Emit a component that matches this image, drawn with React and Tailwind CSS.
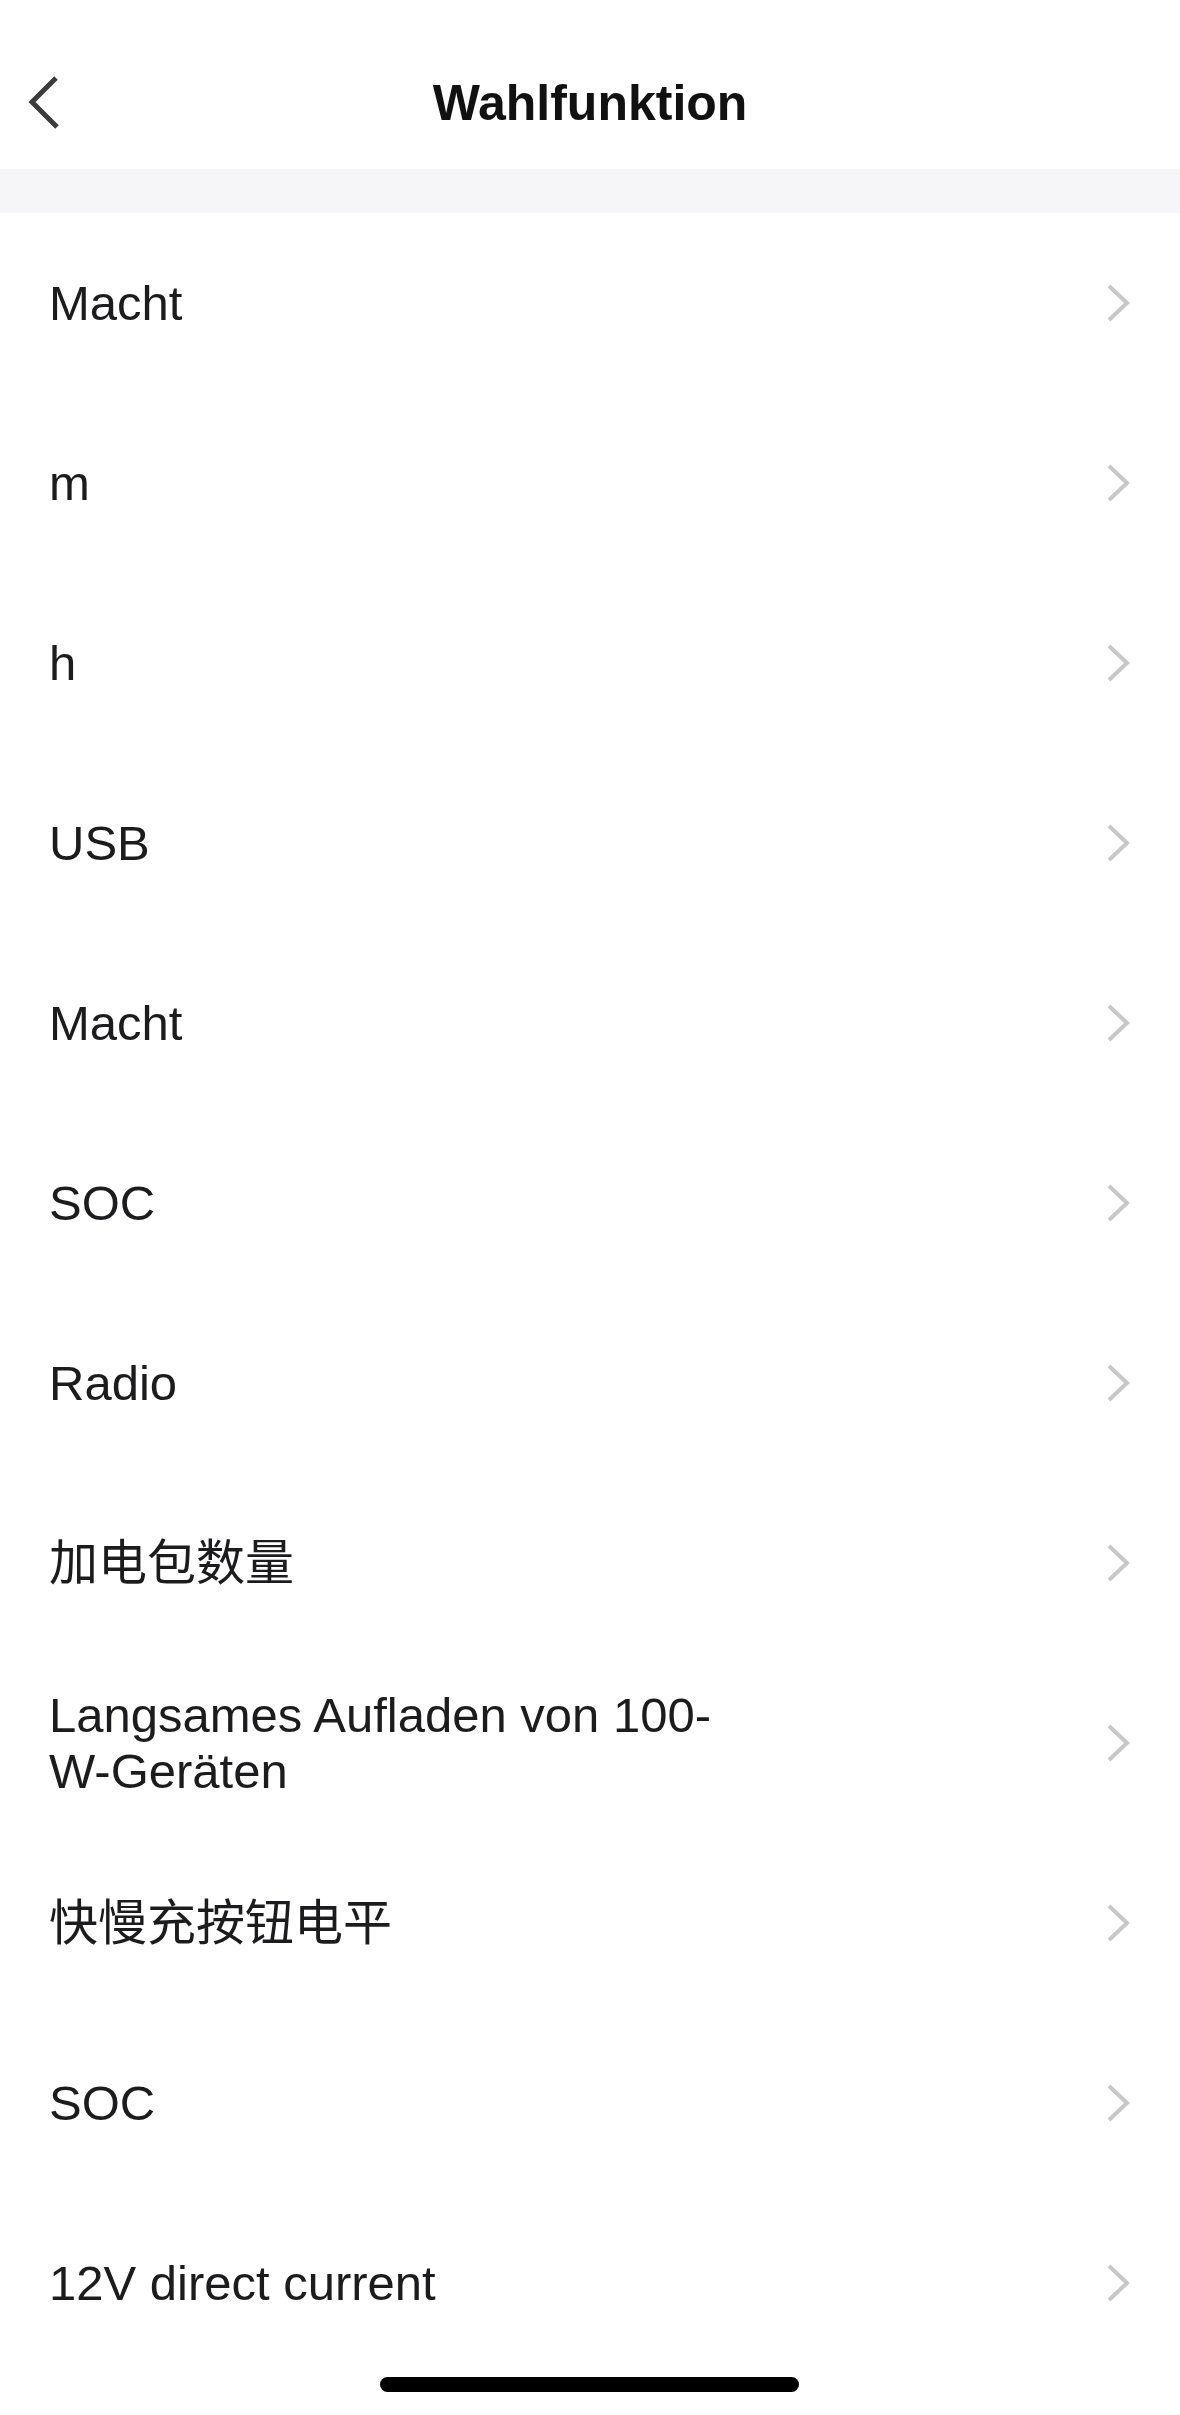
import React from "react";

const items = [
  "Macht",
  "m",
  "h",
  "USB",
  "Macht",
  "SOC",
  "Radio",
  "加电包数量",
  "Langsames Aufladen von 100-W-Geräten",
  "快慢充按钮电平",
  "SOC",
  "12V direct current",
];

function RightChevron() {
  return (
    <svg width="24" height="40" viewBox="0 0 24 40" className="shrink-0">
      <polyline
        points="3,3 21,20 3,37"
        fill="none"
        stroke="#c8c8c8"
        strokeWidth="4"
        strokeLinejoin="miter"
      />
    </svg>
  );
}

export default function App() {
  return (
    <div className="relative w-[1180px] h-[2415px] bg-white overflow-hidden font-['Liberation_Sans','Noto_Sans_CJK_SC',sans-serif]">
      {/* Header */}
      <div className="h-[169px] pt-[36px] bg-white">
        <div className="relative h-[133px] flex items-center justify-center">
          <button className="absolute left-[14px] top-[36px] w-[60px] h-[60px] flex items-center justify-center">
            <svg width="60" height="60" viewBox="0 0 60 60">
              <polyline
                points="42,6 18,30 43,55"
                fill="none"
                stroke="#3c3c3c"
                strokeWidth="5"
                strokeLinejoin="miter"
              />
            </svg>
          </button>
          <h1 className="text-[50px] font-bold text-[#111111] leading-none">
            Wahlfunktion
          </h1>
        </div>
      </div>

      {/* Separator band */}
      <div className="h-[44px] bg-[#f6f6f8]" />

      {/* List */}
      <div className="flex flex-col">
        {items.map((label, i) => (
          <div
            key={i}
            className="h-[180px] flex items-center justify-between pl-[49px] pr-[50px] bg-white"
          >
            <span className="max-w-[720px] text-[49px] leading-[56px] text-[#1c1c1e]">
              {label}
            </span>
            <RightChevron />
          </div>
        ))}
      </div>

      {/* Home indicator */}
      <div className="absolute left-[380px] bottom-[23px] w-[419px] h-[15px] rounded-full bg-black" />
    </div>
  );
}
